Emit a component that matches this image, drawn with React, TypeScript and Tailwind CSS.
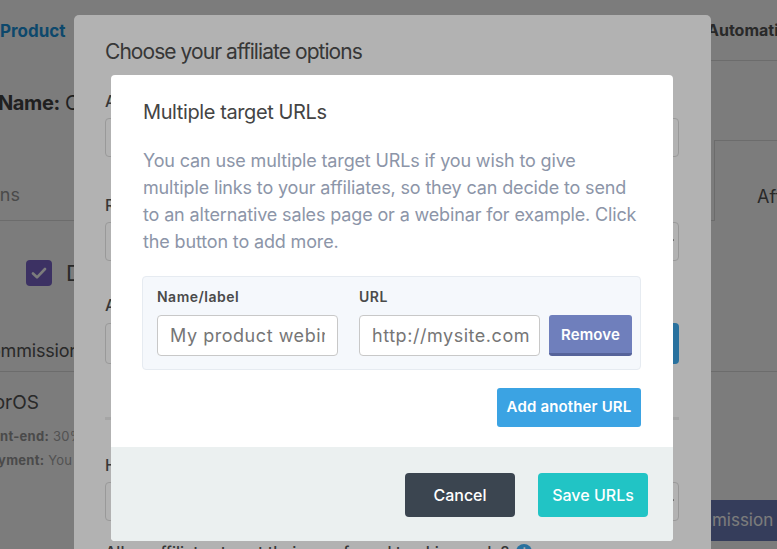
import React from "react";

function Chevron() {
  return (
    <svg width="10" height="6" viewBox="0 0 10 6" className="shrink-0">
      <path d="M1 1l4 4 4-4" fill="none" stroke="#444" strokeWidth="1.6" strokeLinecap="round" strokeLinejoin="round" />
    </svg>
  );
}

export default function App() {
  return (
    <div className="relative w-[777px] h-[549px] overflow-hidden bg-white font-[Inter,sans-serif]">
      {/* Base page */}
      <div className="flex flex-col w-full h-full">
        <div className="flex h-[61px] shrink-0">
          <div className="flex-1 flex items-center">
            <span className="text-[17px] font-bold text-[#1e96de] leading-[20px]">Product</span>
          </div>
          <div className="w-[370px] flex items-center border-b border-[#dedede] pl-[300px] overflow-hidden">
            <span className="text-[16px] font-bold text-[#555] whitespace-nowrap">Automation</span>
          </div>
        </div>
        <div className="h-[79px] pt-[28px] shrink-0">
          <div className="text-[20px] leading-[28px] text-[#444] whitespace-nowrap ml-[-2px] tracking-[-0.02em]">
            <span className="font-bold">Name:</span> Course
          </div>
        </div>
        <div className="h-[81px] flex border-b border-[#dedede] shrink-0">
          <div className="w-[20px] flex justify-end pt-[43px]">
            <span className="text-[18px] leading-[24px] text-[#9a9a9a] whitespace-nowrap">Options</span>
          </div>
          <div className="flex-1" />
          <div className="w-[63px] shrink-0 border-l border-t border-[#dedede] bg-white mb-[-1px] pl-[42px] pt-[44px] overflow-hidden">
            <span className="text-[18px] leading-[24px] text-[#555] whitespace-nowrap">Affiliates</span>
          </div>
        </div>
        <div className="flex items-center pl-[26px] mt-[39px] shrink-0">
          <div className="w-[26px] h-[26px] rounded-[4px] bg-[#7b66cc] flex items-center justify-center">
            <svg width="16" height="12" viewBox="0 0 16 12">
              <path d="M2 6.5l4 3.8L14 2" fill="none" stroke="white" strokeWidth="2.6" strokeLinecap="round" strokeLinejoin="round" />
            </svg>
          </div>
          <span className="ml-[14px] text-[22px] leading-[26px] text-[#555]">Default</span>
        </div>
        <div className="h-[86px] flex items-end border-b border-[#dedede] pb-[8px] shrink-0">
          <span className="text-[18px] leading-[24px] text-[#555] whitespace-nowrap ml-[-23px] tracking-[-0.01em]">Commissions</span>
        </div>
        <div className="flex shrink-0">
          <div className="flex flex-col">
            <div className="w-[39px] flex justify-end mt-[19px]">
              <span className="text-[19px] leading-[24px] text-[#555] whitespace-nowrap">MentorOS</span>
            </div>
            <div className="mt-[12px] ml-[-21px] text-[13px] leading-[18px] text-[#aaa] whitespace-nowrap tracking-[0.02em]">
              <span className="font-bold text-[#999]">Front-end:</span> 30% commission
            </div>
            <div className="mt-[6px] ml-[-18px] text-[13px] leading-[18px] text-[#aaa] whitespace-nowrap tracking-[0.02em]">
              <span className="font-bold text-[#999]">Payment:</span> You pay
            </div>
          </div>
          <div className="flex-1" />
          <div className="mt-[128px] w-[160px] shrink-0">
            <div className="h-[41px] bg-[#6f7fbc] rounded-l-[4px] flex items-center pl-[16px] whitespace-nowrap text-white text-[17px]">
              Save commission settings
            </div>
          </div>
        </div>
      </div>

      {/* Overlay 1 */}
      <div className="absolute inset-0 bg-black/30" />

      {/* Modal 1 */}
      <div className="absolute left-[74px] top-[15px] w-[637px] h-[600px] bg-white rounded-[5px] pl-[31px] pr-[32px] pt-[24px]">
        <h2 className="text-[21px] leading-[26px] text-[#505050] tracking-[-0.045em]">Choose your affiliate options</h2>
        <div className="mt-[26px] text-[16px] leading-[20px] font-medium text-[#505050]">Affiliate program name</div>
        <div className="mt-[7px] h-[39px] border border-[#dcdcdc] rounded-[4px]" />
        <div className="mt-[38px] text-[16px] leading-[20px] font-medium text-[#505050]">Referral cookie duration</div>
        <div className="mt-[7px] h-[39px] border border-[#dcdcdc] rounded-[4px] flex items-center justify-end pr-[4px]">
          <Chevron />
        </div>
        <div className="mt-[34px] text-[16px] leading-[20px] font-medium text-[#505050]">Affiliate target URL</div>
        <div className="mt-[8px] h-[41px] flex">
          <div className="flex-1 border border-[#dcdcdc] rounded-l-[4px]" />
          <div className="w-[110px] bg-[#3ba3e3] rounded-r-[4px]" />
        </div>
        <div className="mt-[53px] h-[3px] bg-[#ececec]" />
        <div className="mt-[35px] text-[16px] leading-[20px] font-medium text-[#505050]">How are commissions paid?</div>
        <div className="mt-[7px] h-[39px] border border-[#dcdcdc] rounded-[4px] flex items-center justify-end pr-[4px]">
          <Chevron />
        </div>
        <div className="mt-[20px] flex items-center text-[16px] leading-[22px] font-medium text-[#505050]">
          <span>Allow affiliates to set their own funnel tracking code?</span>
          <span className="ml-[7px] w-[16px] h-[16px] rounded-full bg-[#3ba3e3] text-white text-[11px] font-bold flex items-center justify-center">i</span>
        </div>
      </div>

      {/* Overlay 2 */}
      <div className="absolute inset-0 bg-black/30" />

      {/* Modal 2 */}
      <div className="absolute left-[111px] top-[75px] w-[562px] bg-white rounded-[4px] overflow-hidden">
        <div className="px-[32px] pt-[24px] pb-[20px]">
          <h3 className="text-[20px] leading-[26px] text-[#444] tracking-[-0.02em]">Multiple target URLs</h3>
          <p className="mt-[22px] text-[18px] leading-[27px] text-[#8c95a8] tracking-[-0.008em]">
            You can use multiple target URLs if you wish to give multiple links to your affiliates, so they can decide to send to an alternative sales page or a webinar for example. Click the button to add more.
          </p>
          <div className="mt-[21px] ml-[-1px] bg-[#f5f8fc] border border-[#e6ebf1] rounded-[4px] pt-[11px] pb-[13px] pl-[14px] pr-[8px]">
            <div className="flex items-end">
              <div className="w-[181px] shrink-0">
                <div className="text-[14px] leading-[18px] font-semibold text-[#4a4a4a] tracking-[0.035em]">Name/label</div>
                <input
                  className="mt-[9px] w-full h-[41px] border border-[#c8c8c8] rounded-[4px] bg-white pl-[12px] pr-[12px] text-[18px] tracking-[0.03em] placeholder:text-[#767676] outline-none"
                  placeholder="My product webinar"
                />
              </div>
              <div className="w-[181px] shrink-0 ml-[21px]">
                <div className="text-[14px] leading-[18px] font-semibold text-[#4a4a4a] tracking-[0.035em]">URL</div>
                <input
                  className="mt-[9px] w-full h-[41px] border border-[#c8c8c8] rounded-[4px] bg-white pl-[12px] pr-[8px] text-[18px] tracking-[0.03em] placeholder:text-[#767676] outline-none"
                  placeholder="http://mysite.com"
                />
              </div>
              <button className="ml-[9px] w-[83px] h-[41px] shrink-0 bg-[#6f7fbc] border-b-[3px] border-[#56639a] rounded-[3px] text-white text-[15px] font-semibold pt-[2px] tracking-[0.01em]">
                Remove
              </button>
            </div>
          </div>
          <div className="flex justify-end mt-[18px]">
            <button className="w-[144px] h-[39px] bg-[#3ba3e3] rounded-[3px] text-white text-[15px] font-semibold tracking-[0.01em]">
              Add another URL
            </button>
          </div>
        </div>
        <div className="h-[94px] bg-[#ebf0f0] flex justify-end items-start pt-[26px] pr-[25px] gap-[23px]">
          <button className="w-[110px] h-[44px] bg-[#3b4550] rounded-[4px] text-white text-[16px] font-medium">Cancel</button>
          <button className="w-[110px] h-[44px] bg-[#21c4c5] rounded-[4px] text-white text-[16px] font-medium">Save URLs</button>
        </div>
      </div>
    </div>
  );
}
